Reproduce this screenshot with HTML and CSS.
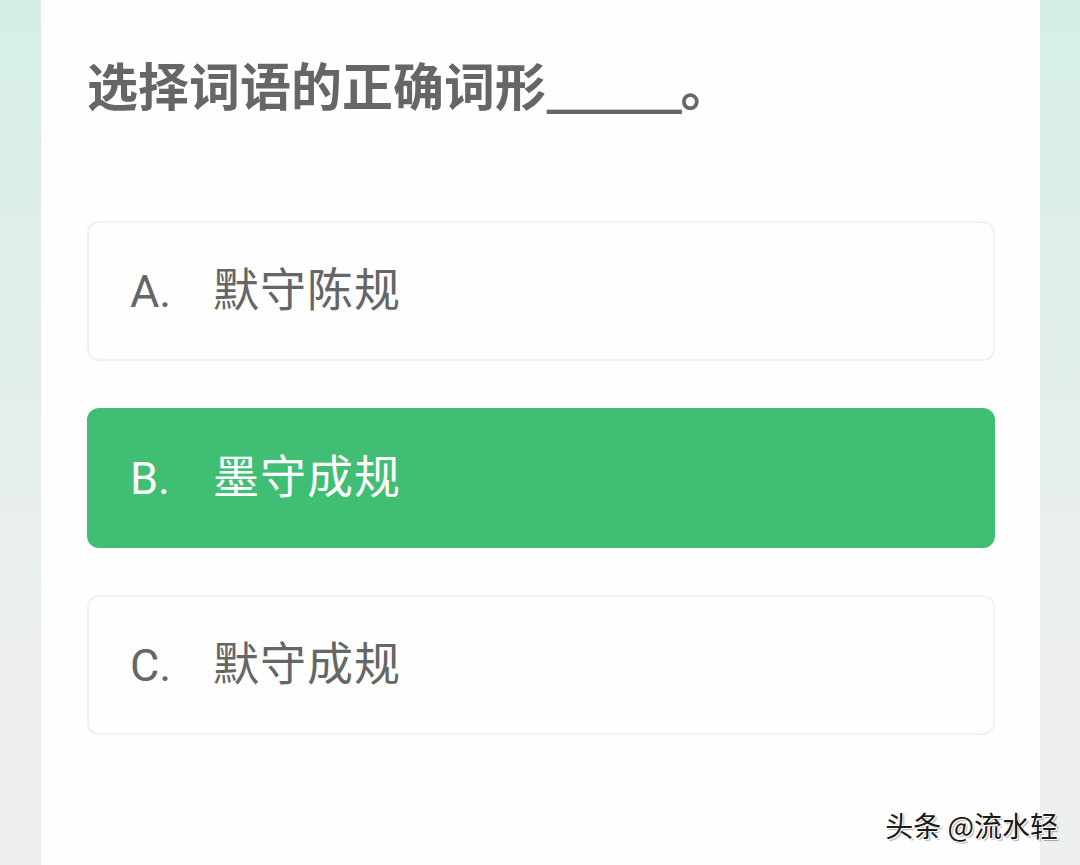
FILE: index.html
```html
<!DOCTYPE html>
<html lang="zh-CN">
  <head>
    <meta charset="UTF-8" />
    <meta name="viewport" content="width=device-width, initial-scale=1.0" />
    <title>选择题</title>
    <link rel="stylesheet" href="styles.css">
  </head>
  <body>
    <div class="page">
      <div class="card">
        <div class="question">选择词语的正确词形<span class="blank">_____</span>。</div>
        <div class="options">
          <div class="option">
            <span class="option-key">A.</span>
            <span class="option-text">默守陈规</span>
          </div>
          <div class="option selected">
            <span class="option-key">B.</span>
            <span class="option-text">墨守成规</span>
          </div>
          <div class="option">
            <span class="option-key">C.</span>
            <span class="option-text">默守成规</span>
          </div>
        </div>
      </div>
      <div class="watermark">头条 @流水轻</div>
    </div>
  </body>
</html>
```

FILE: styles.css
```css
html,
body {
  margin: 0;
  height: 100%;
}

body {
  font-family: "Noto Sans CJK SC", "Noto Sans", sans-serif;
  background: linear-gradient(180deg, #d6eee8 0%, #e3eeeb 45%, #ecefee 75%, #eeefef 100%);
  overflow: hidden;
}

.page {
  position: relative;
  height: 865px;
}

.card {
  margin: 0 40px 0 41px;
  height: 100%;
  background-color: #fefefe;
  padding: 49px 45px 0 46px;
  box-sizing: border-box;
}

.question {
  font-size: 51px;
  font-weight: 700;
  line-height: 70px;
  color: #666;
  white-space: nowrap;
}

.blank {
  letter-spacing: -2px;
}

.options {
  margin-top: 102px;
  display: flex;
  flex-direction: column;
  gap: 47px;
}

.option {
  height: 140px;
  box-sizing: border-box;
  border: 2px solid #f1f1f1;
  border-radius: 12px;
  display: flex;
  align-items: center;
  padding-left: 41px;
  color: #666;
  background-color: #fefefe;
}

.option.selected {
  background-color: #40be74;
  border-color: #40be74;
  color: #fdfefd;
}

.option-key {
  font-family: Roboto, "Noto Sans", sans-serif;
  font-size: 45px;
  width: 83px;
}

.option-text {
  font-size: 46px;
  letter-spacing: 1px;
  margin-bottom: 10px;
}

.watermark {
  position: absolute;
  right: 22px;
  bottom: 20px;
  font-size: 28px;
  color: #1a1a1a;
  text-shadow: 1px 1px 0 #fff, -1px -1px 0 #fff, 2px 2px 1px rgba(0, 0, 0, 0.3);
}
```
